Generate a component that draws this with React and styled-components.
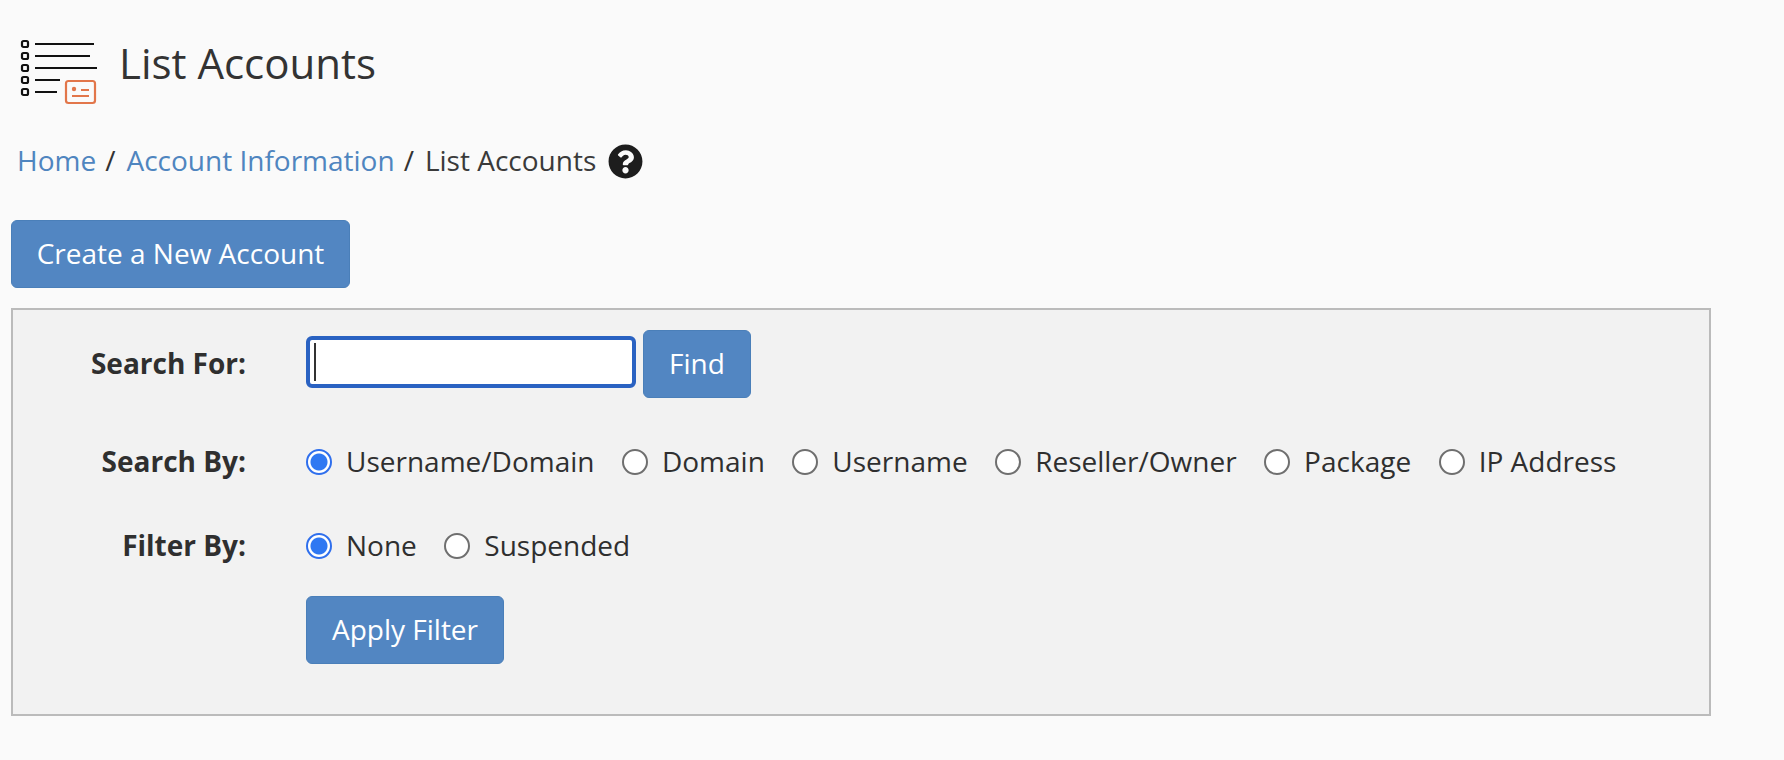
import styled, { createGlobalStyle } from "styled-components";
import { FaQuestionCircle } from "react-icons/fa";

const searchOptions = [
  "Username/Domain",
  "Domain",
  "Username",
  "Reseller/Owner",
  "Package",
  "IP Address",
];

const filterOptions = ["None", "Suspended"];

function App() {
  return (
    <>
      <GlobalStyle />
      <Page>
        <Header>
          <PageIcon />
          <Title>List Accounts</Title>
        </Header>
        <Breadcrumb>
          <Crumb href="#">Home</Crumb>
          <Slash>/</Slash>
          <Crumb href="#">Account Information</Crumb>
          <Slash>/</Slash>
          <Current>List Accounts</Current>
          <HelpIcon />
        </Breadcrumb>
        <CreateButton type="button">Create a New Account</CreateButton>
        <Panel>
          <SearchRow>
            <Label>Search For:</Label>
            <SearchInput type="text" aria-label="Search For" />
            <FindButton type="button">Find</FindButton>
          </SearchRow>
          <SearchByRow>
            <Label>Search By:</Label>
            <Options>
              {searchOptions.map((option, i) => (
                <Option key={option}>
                  <Radio type="radio" name="searchBy" defaultChecked={i === 0} />
                  {option}
                </Option>
              ))}
            </Options>
          </SearchByRow>
          <FilterRow>
            <Label>Filter By:</Label>
            <Options>
              {filterOptions.map((option, i) => (
                <Option key={option}>
                  <Radio type="radio" name="filterBy" defaultChecked={i === 0} />
                  {option}
                </Option>
              ))}
            </Options>
          </FilterRow>
          <ApplyRow>
            <ApplyButton type="button">Apply Filter</ApplyButton>
          </ApplyRow>
        </Panel>
      </Page>
    </>
  );
}

function PageIcon() {
  return (
    <IconSvg viewBox="0 0 78 68" aria-hidden="true">
      <g fill="none" stroke="#111" strokeWidth="2.2">
        <rect x="2" y="2" width="6" height="6" rx="1.5" />
        <rect x="2" y="14" width="6" height="6" rx="1.5" />
        <rect x="2" y="26" width="6" height="6" rx="1.5" />
        <rect x="2" y="38" width="6" height="6" rx="1.5" />
        <rect x="2" y="50" width="6" height="6" rx="1.5" />
        <path d="M15 5h59M15 17h55M15 29h62M15 41h25M15 53h22" />
      </g>
      <g fill="none" stroke="#e2764a" strokeWidth="2.2">
        <rect x="46" y="42" width="29" height="22" rx="2.5" />
        <path d="M61 51h8M52 57h17" />
      </g>
      <circle cx="54" cy="50" r="2.2" fill="#e2764a" />
    </IconSvg>
  );
}

export default App;

const GlobalStyle = createGlobalStyle`
  html, body {
    margin: 0;
    background: #fafafa;
    color: #2f2f2f;
    font-family: "Open Sans", "Noto Sans", sans-serif;
  }
`;

const Page = styled.div`
  display: flex;
  flex-direction: column;
  align-items: flex-start;
  width: 1784px;
  height: 760px;
  box-sizing: border-box;
  padding: 39px 73px 0 11px;
  overflow: hidden;
`;

const Header = styled.header`
  display: flex;
  align-items: center;
  height: 68px;
  padding-left: 9px;
`;

const IconSvg = styled.svg`
  width: 78px;
  height: 68px;
  flex: none;
`;

const Title = styled.h1`
  margin: 0 0 20px 21px;
  font-size: 42px;
  font-weight: 400;
  line-height: 48px;
  color: #333;
`;

const Breadcrumb = styled.nav`
  display: flex;
  align-items: center;
  height: 36px;
  margin-top: 35px;
  padding-left: 6px;
  font-size: 28px;
`;

const Crumb = styled.a`
  color: #4f85bf;
  text-decoration: none;
`;

const Slash = styled.span`
  margin: 0 11px 0 9px;
  color: #333;
`;

const Current = styled.span`
  color: #3a3a3a;
`;

const HelpIcon = styled(FaQuestionCircle)`
  width: 35px;
  height: 35px;
  margin: 2px 0 0 12px;
  color: #1d1d1d;
`;

const Button = styled.button`
  box-sizing: border-box;
  height: 68px;
  padding: 0 0 2px;
  border: 1px solid #4a7fb9;
  border-radius: 6px;
  background: #5286c2;
  color: #fff;
  font: inherit;
  font-size: 28px;
`;

const CreateButton = styled(Button)`
  width: 339px;
  margin-top: 42px;
`;

const FindButton = styled(Button)`
  width: 108px;
  margin-left: 7px;
`;

const ApplyButton = styled(Button)`
  width: 198px;
`;

const Panel = styled.section`
  box-sizing: border-box;
  width: 100%;
  height: 408px;
  margin-top: 20px;
  padding: 20px 0 0;
  border: 2px solid #bbb;
  background: #f2f2f2;
`;

const Row = styled.div`
  display: flex;
  align-items: center;
`;

const SearchRow = styled(Row)`
  height: 68px;
`;

const SearchByRow = styled(Row)`
  height: 34px;
  margin-top: 47px;
`;

const FilterRow = styled(Row)`
  height: 34px;
  margin-top: 50px;
`;

const ApplyRow = styled(Row)`
  margin-top: 33px;
  padding-left: 293px;
`;

const Label = styled.label`
  flex: none;
  box-sizing: border-box;
  width: 293px;
  padding: 0 60px 2px 0;
  text-align: right;
  font-size: 28px;
  font-weight: 700;
`;

const SearchInput = styled.input`
  box-sizing: border-box;
  width: 330px;
  height: 52px;
  margin-top: -4px;
  padding: 0;
  border: 4px solid #2a62c2;
  border-radius: 6px;
  outline: none;
  background: linear-gradient(#333, #333) 4px 3px / 2px 38px no-repeat #fff;
`;

const Options = styled.div`
  display: flex;
  align-items: center;
  gap: 27.500px;
`;

const Option = styled.label`
  display: flex;
  align-items: center;
  gap: 14px;
  padding-bottom: 2px;
  font-size: 28px;
`;

const Radio = styled.input`
  appearance: none;
  box-sizing: border-box;
  width: 26px;
  height: 26px;
  margin: 2px 0 0;
  border: 2px solid #6f6f6f;
  border-radius: 50%;
  background: #fff;

  &:checked {
    border-color: #2f6fed;
    background: radial-gradient(circle, #2f78f2 0 8px, #fff 9px);
  }
`;
